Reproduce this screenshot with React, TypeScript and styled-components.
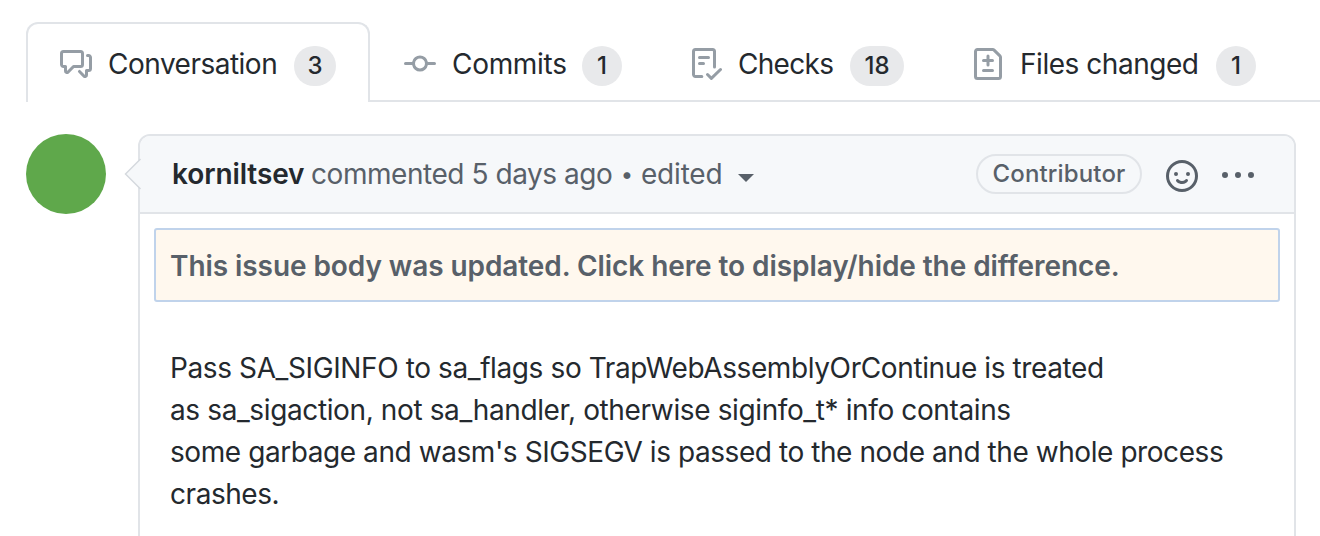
import React from "react";
import styled, { createGlobalStyle } from "styled-components";

const GlobalStyle = createGlobalStyle`
  *, *::before, *::after { box-sizing: border-box; }
  body {
    margin: 0;
    background: #fff;
    color: #24292e;
    font-family: Inter, "Liberation Sans", sans-serif;
    font-size: 28px;
    line-height: 42px;
    overflow: hidden;
  }
`;

const Page = styled.div`
  height: 536px;
  padding-top: 22px;
  overflow: hidden;
`;

const TabBar = styled.nav`
  display: flex;
  height: 80px;
  margin-left: 26px;
  background: linear-gradient(#e1e4e8, #e1e4e8) 0 100% / 100% 2px no-repeat;
`;

const Tab = styled.a<{ $active?: boolean }>`
  display: flex;
  align-items: flex-start;
  height: 80px;
  padding: 24px 32px 0;
  border: 2px solid ${(p) => (p.$active ? "#e1e4e8" : "transparent")};
  border-bottom: 0;
  border-radius: 12px 12px 0 0;
  background: ${(p) => (p.$active ? "#fff" : "transparent")};
  white-space: nowrap;
`;

const Icon = styled.svg<{ $color?: string }>`
  flex: none;
  width: 32px;
  height: 32px;
  fill: ${(p) => p.$color ?? "#959da5"};
`;

const TabLabel = styled.span<{ $width: number; $spacing: number }>`
  flex: none;
  width: ${(p) => p.$width}px;
  margin: -5px 16px 0;
  letter-spacing: ${(p) => p.$spacing}px;
`;

const Counter = styled.span<{ $width: number }>`
  flex: none;
  width: ${(p) => p.$width}px;
  height: 40px;
  margin-top: -2px;
  border-radius: 20px;
  background: #e8e9eb;
  font-size: 24px;
  font-weight: 500;
  line-height: 40px;
  text-align: center;
`;

const Timeline = styled.main`
  display: flex;
  gap: 32px;
  padding: 32px 24px 0 26px;
`;

const Avatar = styled.div`
  flex: none;
  width: 80px;
  height: 80px;
  border-radius: 50%;
  background: #5fa84b;
`;

const Comment = styled.article`
  position: relative;
  flex: 1;
  height: 440px;
  border: 2px solid #e1e4e8;
  border-radius: 12px;
`;

const Pointer = styled.svg`
  position: absolute;
  top: 22px;
  left: -16px;
  width: 18px;
  height: 32px;
`;

const CommentHeader = styled.header`
  display: flex;
  align-items: flex-start;
  height: 78px;
  padding: 17px 40px 0 32px;
  border-bottom: 2px solid #e1e4e8;
  border-radius: 10px 10px 0 0;
  background: #f6f8fa;
  color: #586069;
  white-space: nowrap;
`;

const Author = styled.strong`
  width: 139px;
  color: #24292e;
  font-weight: 600;
  letter-spacing: -0.1px;
`;

const Meta = styled.span`
  flex: none;
  width: 302px;
  letter-spacing: -0.45px;
`;

const Bullet = styled.span`
  flex: none;
  width: 28px;
  font-size: 22px;
  text-align: center;
`;

const Edited = styled.span`
  flex: none;
  width: 81px;
  letter-spacing: -0.2px;
`;

const Caret = styled.span`
  margin: 21px auto 0 16px;
  border: 8px solid transparent;
  border-top-color: #586069;
  border-bottom: 0;
`;

const RoleBadge = styled.span`
  width: 166px;
  height: 40px;
  margin-top: 1px;
  border: 2px solid #e1e4e8;
  border-radius: 20px;
  font-size: 24px;
  font-weight: 500;
  letter-spacing: 0.15px;
  line-height: 36px;
  text-align: center;
`;

const HeaderIcon = styled(Icon)`
  margin: 7px 0 0 24px;
`;

const Notice = styled.div`
  height: 74px;
  margin: 14px 14px 0;
  padding: 15px 14px;
  border: 2px solid #c0d3eb;
  border-radius: 3px;
  background: #fff8ee;
  color: #586069;
  font-weight: 600;
  letter-spacing: -0.075px;
  white-space: nowrap;
`;

const Body = styled.p`
  margin: 45px 30px 0;
  white-space: nowrap;
`;

const Line = styled.span<{ $spacing: number }>`
  display: block;
  letter-spacing: ${(p) => p.$spacing}px;
`;

const icons = {
  discussion:
    "M1.5 2.75a.25.25 0 01.25-.25h8.5a.25.25 0 01.25.25v5.5a.25.25 0 01-.25.25h-3.5a.75.75 0 00-.53.22L3.5 11.44V9.25a.75.75 0 00-.75-.75h-1a.25.25 0 01-.25-.25v-5.5zM1.75 1A1.75 1.75 0 000 2.75v5.5C0 9.216.784 10 1.75 10H2v1.543a1.457 1.457 0 002.487 1.03L7.061 10h3.189A1.75 1.75 0 0012 8.25v-5.5A1.75 1.75 0 0010.25 1h-8.5zM14.5 4.75a.25.25 0 00-.25-.25h-.5a.75.75 0 110-1.5h.5c.966 0 1.75.784 1.75 1.75v5.5A1.75 1.75 0 0114.25 12H14v1.543a1.457 1.457 0 01-2.487 1.03L9.22 12.28a.75.75 0 111.06-1.06l2.22 2.22v-2.19a.75.75 0 01.75-.75h1a.25.25 0 00.25-.25v-5.5z",
  commit:
    "M10.5 7.75a2.5 2.5 0 11-5 0 2.5 2.5 0 015 0zm1.43.75a4.002 4.002 0 01-7.86 0H.75a.75.75 0 110-1.5h3.32a4.001 4.001 0 017.86 0h3.32a.75.75 0 110 1.5h-3.32z",
  checklist:
    "M2.5 1.75a.25.25 0 01.25-.25h8.5a.25.25 0 01.25.25v7.736a.75.75 0 101.5 0V1.75A1.75 1.75 0 0011.25 0h-8.5A1.75 1.75 0 001 1.75v11.5c0 .966.784 1.75 1.75 1.75h3.17a.75.75 0 000-1.5H2.75a.25.25 0 01-.25-.25V1.75zM4.75 4a.75.75 0 000 1.5h4.5a.75.75 0 000-1.5h-4.5zM4 7.75A.75.75 0 014.75 7h2a.75.75 0 010 1.5h-2A.75.75 0 014 7.75zm11.774 3.537a.75.75 0 00-1.048-1.074L10.7 14.145 9.281 12.72a.75.75 0 00-1.062 1.058l1.943 1.95a.75.75 0 001.055.008l4.557-4.45z",
  diff: "M2.75 1.5a.25.25 0 00-.25.25v12.5c0 .138.112.25.25.25h10.5a.25.25 0 00.25-.25V4.664a.25.25 0 00-.073-.177l-2.914-2.914a.25.25 0 00-.177-.073H2.75zM1 1.75C1 .784 1.784 0 2.75 0h7.586c.464 0 .909.184 1.237.513l2.914 2.914c.329.328.513.773.513 1.237v9.586A1.75 1.75 0 0113.25 16H2.75A1.75 1.75 0 011 14.25V1.75zm7 1.5a.75.75 0 01.75.75v1.5h1.5a.75.75 0 010 1.5h-1.5v1.5a.75.75 0 01-1.5 0V7h-1.5a.75.75 0 010-1.5h1.5V4A.75.75 0 018 3.25zm-3 8a.75.75 0 01.75-.75h4.5a.75.75 0 010 1.5h-4.5a.75.75 0 01-.75-.75z",
  smiley:
    "M1.5 8a6.5 6.5 0 1113 0 6.5 6.5 0 01-13 0zM8 0a8 8 0 100 16A8 8 0 008 0zM5 8a1 1 0 100-2 1 1 0 000 2zm7-1a1 1 0 11-2 0 1 1 0 012 0zM5.32 9.636a.75.75 0 011.038.175l.007.009c.103.118.22.222.35.31.264.178.683.37 1.285.37.602 0 1.02-.192 1.285-.371.13-.088.247-.192.35-.31l.007-.008a.75.75 0 111.222.87l-.614-.431c.614.43.614.431.613.431v.001l-.001.002-.002.003-.005.007-.014.019a1.984 1.984 0 01-.184.213c-.16.166-.338.316-.53.445-.63.418-1.37.638-2.127.629-.946 0-1.652-.308-2.126-.63a3.32 3.32 0 01-.715-.657l-.014-.02-.005-.006-.002-.003v-.002h-.001l.613-.432-.614.43a.75.75 0 01.183-1.044h.001z",
  kebab:
    "M8 9a1.5 1.5 0 100-3 1.5 1.5 0 000 3zM1.5 9a1.5 1.5 0 100-3 1.5 1.5 0 000 3zm13 0a1.5 1.5 0 100-3 1.5 1.5 0 000 3z",
};

const tabs = [
  { label: "Conversation", icon: icons.discussion, count: 3, width: 170, spacing: -0.5, badge: 42, active: true },
  { label: "Commits", icon: icons.commit, count: 1, width: 114, spacing: -0.3, badge: 40 },
  { label: "Checks", icon: icons.checklist, count: 18, width: 96, spacing: -0.7, badge: 54 },
  { label: "Files changed", icon: icons.diff, count: 1, width: 180, spacing: -0.46, badge: 40 },
];

const lines = [
  { text: "Pass SA_SIGINFO to sa_flags so TrapWebAssemblyOrContinue is treated", spacing: -0.39 },
  { text: "as sa_sigaction, not sa_handler, otherwise siginfo_t* info contains", spacing: -0.38 },
  { text: "some garbage and wasm's SIGSEGV is passed to the node and the whole process", spacing: -0.43 },
  { text: "crashes.", spacing: -0.45 },
];

export default function App() {
  return (
    <Page>
      <GlobalStyle />
      <TabBar>
        {tabs.map((t) => (
          <Tab key={t.label} $active={t.active}>
            <Icon viewBox="0 0 16 16" fillRule="evenodd">
              <path d={t.icon} />
            </Icon>
            <TabLabel $width={t.width} $spacing={t.spacing}>{t.label}</TabLabel>
            <Counter $width={t.badge}>{t.count}</Counter>
          </Tab>
        ))}
      </TabBar>
      <Timeline>
        <Avatar />
        <Comment>
          <CommentHeader>
            <Author>korniltsev</Author>
            <Meta>commented 5 days ago</Meta>
            <Bullet>•</Bullet>
            <Edited>edited</Edited>
            <Caret />
            <RoleBadge>Contributor</RoleBadge>
            <HeaderIcon viewBox="0 0 16 16" fillRule="evenodd" $color="#586069">
              <path d={icons.smiley} />
            </HeaderIcon>
            <HeaderIcon viewBox="0 0 16 16" fillRule="evenodd" $color="#586069">
              <path d={icons.kebab} />
            </HeaderIcon>
          </CommentHeader>
          <Pointer viewBox="0 0 18 32">
            <path d="M18 0 L2 16 L18 32Z" fill="#f6f8fa" />
            <path d="M16.5 1 L1.5 16 L16.5 31" fill="none" stroke="#d5d9de" strokeWidth="1.5" />
          </Pointer>
          <Notice>This issue body was updated. Click here to display/hide the difference.</Notice>
          <Body>
            {lines.map((l) => (
              <Line key={l.text} $spacing={l.spacing}>{l.text}</Line>
            ))}
          </Body>
        </Comment>
      </Timeline>
    </Page>
  );
}
